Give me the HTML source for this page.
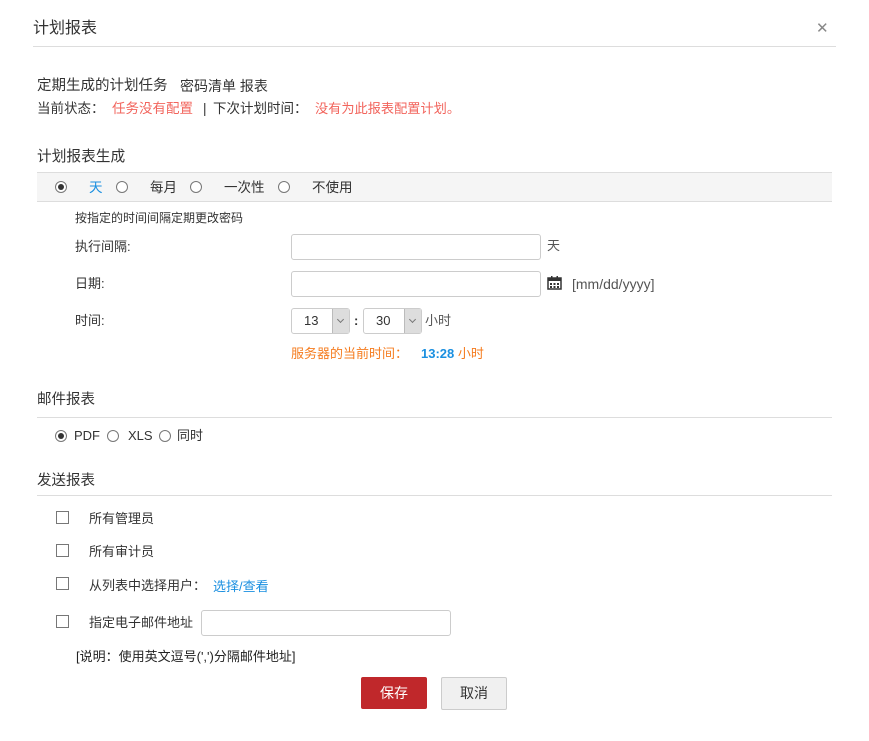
<!DOCTYPE html>
<html><head><meta charset="utf-8"><style>
body{margin:0;width:869px;height:741px;background:#fff;font-family:"Liberation Sans","Noto Sans CJK SC",sans-serif;color:#333;font-size:13px;position:relative;overflow:hidden}
.a{position:absolute;white-space:nowrap;line-height:16px}
.line{position:absolute;height:1px;background:#ddd}
.rad{position:absolute;width:10px;height:10px;border:1px solid #777;border-radius:50%;background:#fff}
.rad.on::after{content:"";position:absolute;left:2px;top:2px;width:6px;height:6px;border-radius:50%;background:#333}
.cb{position:absolute;width:11px;height:11px;border:1px solid #777;background:#fff}
.inp{position:absolute;border:1px solid #ccc;border-radius:3px;background:#fff;height:24px}
.sel{position:absolute;border:1px solid #ccc;border-radius:3px;height:24px;background:#fff;width:57px}
.sel span{position:absolute;left:12px;top:4px}
.sel i{position:absolute;right:0;top:0;width:16px;height:24px;background:#ddd;border-left:1px solid #bbb}
.sel i::after{content:"";position:absolute;left:5px;top:8px;width:4px;height:4px;border-right:1px solid #777;border-bottom:1px solid #777;transform:rotate(45deg)}
.btn{position:absolute;height:32px;border-radius:2px;text-align:center;line-height:32px;font-size:14px}
.r{color:#f2645c}
</style></head><body>
<div class="a" style="left:33px;top:20px;font-size:16px;line-height:18px">计划报表</div>
<div class="a" style="left:816px;top:21px;font-size:15px;color:#888">✕</div>
<div class="line" style="left:33px;top:46px;width:803px"></div>

<div class="a" style="left:37px;top:78px;font-size:14.5px">定期生成的计划任务</div>
<div class="a" style="left:180px;top:78px;font-size:14px">密码清单 报表</div>
<div class="a" style="left:37px;top:101px;font-size:13.5px">当前状态：</div>
<div class="a r" style="left:112px;top:101px;font-size:13.5px">任务没有配置</div>
<div class="a" style="left:203px;top:101px;font-size:13.5px">|</div>
<div class="a" style="left:213px;top:101px;font-size:13.5px">下次计划时间：</div>
<div class="a r" style="left:315px;top:101px;font-size:13.2px">没有为此报表配置计划。</div>

<div class="a" style="left:37px;top:149px;font-size:14.7px">计划报表生成</div>
<div style="position:absolute;left:37px;top:172px;width:795px;height:28px;background:#f5f5f5;border-top:1px solid #ddd;border-bottom:1px solid #ddd"></div>
<div class="rad on" style="left:55px;top:181px"></div><div class="a" style="left:89px;top:180px;color:#1a8fe0;font-size:13.5px">天</div>
<div class="rad" style="left:116px;top:181px"></div><div class="a" style="left:150px;top:180px;font-size:13.5px">每月</div>
<div class="rad" style="left:190px;top:181px"></div><div class="a" style="left:224px;top:180px;font-size:13.5px">一次性</div>
<div class="rad" style="left:278px;top:181px"></div><div class="a" style="left:312px;top:180px;font-size:13.5px">不使用</div>

<div class="a" style="left:75px;top:210px;font-size:12px">按指定的时间间隔定期更改密码</div>
<div class="a" style="left:75px;top:239px">执行间隔:</div>
<div class="inp" style="left:291px;top:234px;width:248px"></div>
<div class="a" style="left:547px;top:238px;color:#555">天</div>
<div class="a" style="left:75px;top:276px">日期:</div>
<div class="inp" style="left:291px;top:271px;width:248px"></div>
<svg style="position:absolute;left:547px;top:276px" width="15" height="14" viewBox="0 0 15 14"><rect x="1" y="2" width="13" height="11" fill="none" stroke="#333" stroke-width="1.5"/><rect x="1" y="2" width="13" height="3" fill="#333"/><rect x="4" y="0" width="1.5" height="3" fill="#333"/><rect x="9.5" y="0" width="1.5" height="3" fill="#333"/><g fill="#333"><rect x="3" y="7" width="2" height="2"/><rect x="6.5" y="7" width="2" height="2"/><rect x="10" y="7" width="2" height="2"/><rect x="3" y="10" width="2" height="2"/><rect x="6.5" y="10" width="2" height="2"/><rect x="10" y="10" width="2" height="2"/></g></svg>
<div class="a" style="left:572px;top:276px;color:#555;font-size:14px">[mm/dd/yyyy]</div>
<div class="a" style="left:75px;top:313px">时间:</div>
<div class="sel" style="left:291px;top:308px"><span>13</span><i></i></div>
<div class="a" style="left:354px;top:313px;font-weight:bold">:</div>
<div class="sel" style="left:363px;top:308px"><span>30</span><i></i></div>
<div class="a" style="left:425px;top:313px;color:#555">小时</div>
<div class="a" style="left:291px;top:346px;color:#f57c1f">服务器的当前时间：</div>
<div class="a" style="left:421px;top:346px;color:#f57c1f"><b style="color:#1a8fe0">13:28</b> 小时</div>

<div class="a" style="left:37px;top:392px;font-size:14.5px">邮件报表</div>
<div class="line" style="left:37px;top:417px;width:795px"></div>
<div class="rad on" style="left:55px;top:430px"></div><div class="a" style="left:74px;top:428px">PDF</div>
<div class="rad" style="left:107px;top:430px"></div><div class="a" style="left:128px;top:428px">XLS</div>
<div class="rad" style="left:159px;top:430px"></div><div class="a" style="left:177px;top:428px">同时</div>

<div class="a" style="left:37px;top:473px;font-size:14.5px">发送报表</div>
<div class="line" style="left:37px;top:495px;width:795px"></div>
<div class="cb" style="left:56px;top:511px"></div><div class="a" style="left:89px;top:511px">所有管理员</div>
<div class="cb" style="left:56px;top:544px"></div><div class="a" style="left:89px;top:544px">所有审计员</div>
<div class="cb" style="left:56px;top:577px"></div><div class="a" style="left:89px;top:578px">从列表中选择用户：</div>
<div class="a" style="left:213px;top:579px;color:#1a8fe0">选择/查看</div>
<div class="cb" style="left:56px;top:615px"></div><div class="a" style="left:89px;top:615px">指定电子邮件地址</div>
<div class="inp" style="left:201px;top:610px;width:248px"></div>
<div class="a" style="left:76px;top:649px;font-size:13px;color:#222">[说明：使用英文逗号(',')分隔邮件地址]</div>

<div class="btn" style="left:361px;top:677px;width:66px;background:#c0282b;color:#fff">保存</div>
<div class="btn" style="left:441px;top:677px;width:64px;background:#f0f0f0;border:1px solid #ccc;height:31px;line-height:31px">取消</div>
</body></html>
